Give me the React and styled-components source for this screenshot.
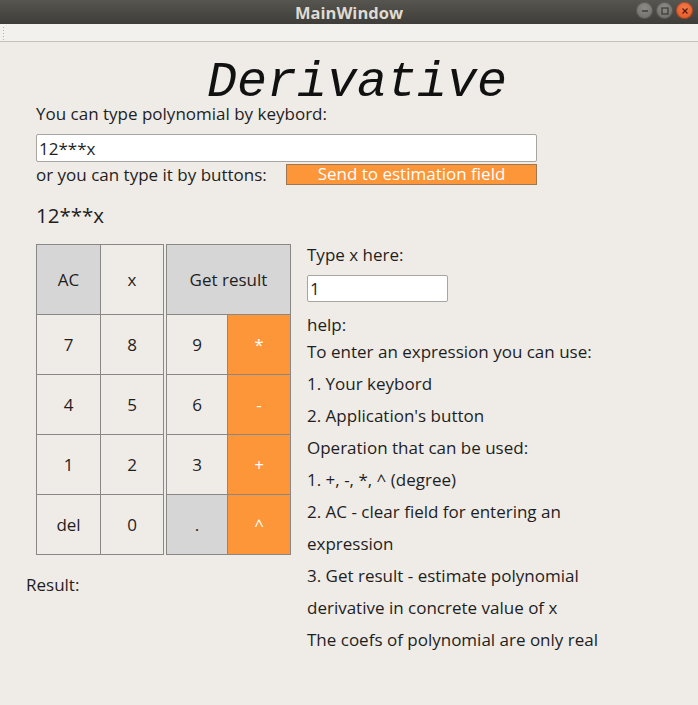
import React from "react";
import styled, { createGlobalStyle } from "styled-components";

const GlobalStyle = createGlobalStyle`
    html, body {
        margin: 0;
        padding: 0;
        background: #efebe7;
    }
    body {
        font-family: "Open Sans", "DejaVu Sans", sans-serif;
        color: #1e1e1e;
    }
`;

const leftKeys = [
    {label: "AC", tone: "gray"},
    {label: "x"},
    {label: "7"}, {label: "8"},
    {label: "4"}, {label: "5"},
    {label: "1"}, {label: "2"},
    {label: "del"}, {label: "0"},
];

const rightKeys = [
    {label: "Get result", tone: "gray", wide: true},
    {label: "9"}, {label: "*", tone: "orange"},
    {label: "6"}, {label: "-", tone: "orange"},
    {label: "3"}, {label: "+", tone: "orange"},
    {label: ".", tone: "gray"}, {label: "^", tone: "orange"},
];

const helpLines = [
    "To enter an expression you can use:",
    "1. Your keybord",
    "2. Application's button",
    "Operation that can be used:",
    "1. +, -, *, ^ (degree)",
    "2. AC - clear field for entering an",
    "expression",
    "3. Get result - estimate polynomial",
    "derivative in concrete value of x",
    "The coefs of polynomial are only real",
];

class App extends React.Component {
    render() {
        return (
            <Window>
                <GlobalStyle/>
                <TitleBar>
                    <TitleText>MainWindow</TitleText>
                    <WindowButtons>
                        <WinButton>
                            <svg width="8" height="8" viewBox="0 0 8 8">
                                <line x1="1" y1="4" x2="7" y2="4" stroke="#3a3935" strokeWidth="1.4"/>
                            </svg>
                        </WinButton>
                        <WinButton>
                            <svg width="8" height="8" viewBox="0 0 8 8">
                                <rect x="1" y="1" width="6" height="6" fill="none" stroke="#3a3935" strokeWidth="1.2"/>
                            </svg>
                        </WinButton>
                        <WinButton close>
                            <svg width="8" height="8" viewBox="0 0 8 8">
                                <path d="M1.5 1.5 L6.5 6.5 M6.5 1.5 L1.5 6.5" stroke="#5a1a08" strokeWidth="1.3"/>
                            </svg>
                        </WinButton>
                    </WindowButtons>
                </TitleBar>
                <MenuStrip>
                    <Grip/>
                </MenuStrip>
                <Content>
                    <Title>Derivative</Title>
                    <Label>You can type polynomial by keybord:</Label>
                    <PolyInput defaultValue="12***x"/>
                    <SendRow>
                        <Label>or you can type it by buttons:</Label>
                        <SendButton>Send to estimation field</SendButton>
                    </SendRow>
                    <Expression>12***x</Expression>
                    <Main>
                        <LeftColumn>
                            <Keypad>
                                <KeyGroup>
                                    {leftKeys.map((k, i) => (
                                        <Key key={i} tone={k.tone}>{k.label}</Key>
                                    ))}
                                </KeyGroup>
                                <KeyGroup right>
                                    {rightKeys.map((k, i) => (
                                        <Key key={i} tone={k.tone} wide={k.wide}>{k.label}</Key>
                                    ))}
                                </KeyGroup>
                            </Keypad>
                            <ResultLabel>Result:</ResultLabel>
                        </LeftColumn>
                        <HelpColumn>
                            <XLabel>Type x here:</XLabel>
                            <XInput defaultValue="1"/>
                            <HelpTitle>help:</HelpTitle>
                            <HelpList>
                                {helpLines.map((line, i) => (
                                    <HelpLine key={i}>{line}</HelpLine>
                                ))}
                            </HelpList>
                        </HelpColumn>
                    </Main>
                </Content>
            </Window>
        )
    }
}

const Window = styled.div`
    width: 698px;
    height: 705px;
    overflow: hidden;
    background: #efebe7;
`;

const TitleBar = styled.div`
    height: 24px;
    position: relative;
    display: flex;
    align-items: center;
    justify-content: center;
    background: linear-gradient(#57554f, #3e3d39);
`;

const TitleText = styled.span`
    font-family: "Open Sans", sans-serif;
    font-weight: 700;
    font-size: 16.5px;
    color: #dfdbd2;
`;

const WindowButtons = styled.div`
    position: absolute;
    right: 5px;
    top: 2px;
    display: flex;
    gap: 3px;
`;

const WinButton = styled.div`
    width: 17px;
    height: 17px;
    border-radius: 50%;
    display: flex;
    align-items: center;
    justify-content: center;
    background: ${p => p.close
        ? "radial-gradient(circle at 50% 35%, #f37a4a, #e0521f)"
        : "radial-gradient(circle at 50% 35%, #8d8b86, #6a6964)"};
    box-shadow: inset 0 0 0 1px rgba(0,0,0,0.25);
`;

const MenuStrip = styled.div`
    height: 17px;
    background: #f3f1ee;
    border-bottom: 1px solid #c3bfba;
    display: flex;
    align-items: center;
    padding-left: 2px;
`;

const Grip = styled.div`
    width: 3px;
    height: 14px;
    background-image: radial-gradient(circle, #b5b1ab 0.8px, transparent 1px);
    background-size: 3px 3px;
`;

const Content = styled.div`
    padding-left: 36px;
    display: flex;
    flex-direction: column;
`;

const Title = styled.div`
    font-family: "Liberation Mono", "Courier New", monospace;
    font-style: italic;
    font-size: 50px;
    line-height: 42px;
    height: 42px;
    margin: 20px 0 0 171px;
    color: #111;
`;

const Label = styled.div`
    font-size: 17px;
    line-height: 20px;
    height: 20px;
    white-space: nowrap;
`;

const PolyInput = styled.input`
    box-sizing: border-box;
    width: 501px;
    height: 28px;
    margin-top: 10px;
    border: 1px solid #a8a5a0;
    border-radius: 2px;
    background: #fff;
    font-family: "Open Sans", sans-serif;
    font-size: 17px;
    padding: 0 2px;
    color: #1e1e1e;
    outline: none;
`;

const SendRow = styled.div`
    display: flex;
    align-items: center;
    justify-content: space-between;
    width: 501px;
    height: 25px;
`;

const SendButton = styled.div`
    box-sizing: border-box;
    width: 251px;
    height: 21px;
    background: #fd9539;
    border: 1px solid #9c7752;
    color: #fff;
    font-size: 17px;
    line-height: 18px;
    text-align: center;
`;

const Expression = styled.div`
    font-size: 20.5px;
    line-height: 26px;
    margin-top: 15px;
    height: 26px;
`;

const Main = styled.div`
    display: flex;
    margin-top: 16px;
    gap: 16px;
`;

const LeftColumn = styled.div`
    display: flex;
    flex-direction: column;
`;

const Keypad = styled.div`
    display: flex;
    gap: 2px;
`;

const KeyGroup = styled.div`
    display: grid;
    grid-template-columns: ${p => p.right ? "60px 62px" : "63px 62px"};
    grid-template-rows: 69px repeat(4, 59px);
    gap: 1px;
    padding: 1px;
    background: #8a8886;
`;

const Key = styled.div`
    display: flex;
    align-items: center;
    justify-content: center;
    font-size: 17px;
    grid-column: ${p => p.wide ? "span 2" : "auto"};
    background: ${p => p.tone === "gray" ? "#d6d6d6" : p.tone === "orange" ? "#fd9539" : "#efebe7"};
    color: ${p => p.tone === "orange" ? "#fff" : "#1e1e1e"};
`;

const ResultLabel = styled.div`
    font-size: 17px;
    line-height: 22px;
    margin: 19px 0 0 -10px;
`;

const HelpColumn = styled.div`
    display: flex;
    flex-direction: column;
`;

const XLabel = styled.div`
    font-size: 17px;
    line-height: 22px;
`;

const XInput = styled(PolyInput)`
    width: 141px;
    height: 27px;
    margin-top: 9px;
`;

const HelpTitle = styled.div`
    font-size: 17px;
    line-height: 22px;
    margin-top: 12px;
`;

const HelpList = styled.div`
    margin-top: 0;
`;

const HelpLine = styled.div`
    font-size: 17px;
    line-height: 32px;
    white-space: nowrap;
`;

export default App;
